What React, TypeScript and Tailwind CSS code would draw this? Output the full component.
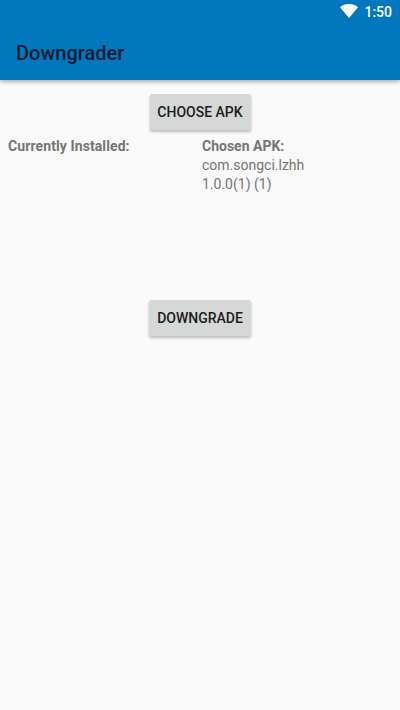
function StatusBar() {
    return (
        <div className="h-6 flex items-center justify-end pr-2 gap-[6px]">
            <svg width="18" height="14" viewBox="0 0 18 14" className="mt-[-2px]">
                <path d="M0 3.2C2.400 1.200 5.500 0 9 0s6.600 1.200 9 3.200L9 14z" fill="#ffffff" />
            </svg>
            <span className="text-[14px] font-medium text-white leading-none">1:50</span>
        </div>
    )
}

function RaisedButton({ label, wide }: { label: string; wide?: boolean }) {
    return (
        <button className={(wide ? "w-[102px]" : "w-[101px]") + " h-9 rounded-[2px] bg-[#d6d7d7] text-[14px] font-medium text-[#1c1c1c] leading-none shadow-[0_2px_3px_rgba(0,0,0,0.25)]"}>
            {label}
        </button>
    )
}

export default function App() {
    return (
        <div className="h-[710px] w-[400px] flex flex-col bg-[#fafafa] font-['Roboto',sans-serif] overflow-hidden">
            {/* App bar */}
            <header className="h-20 shrink-0 bg-[#0277bd] shadow-[0_2px_4px_rgba(0,0,0,0.3)] z-10">
                <StatusBar />
                <div className="h-14 flex items-center pl-4">
                    <h1 className="text-[20px] font-medium text-[#0a1c33] leading-none pt-[1px]">Downgrader</h1>
                </div>
            </header>

            <main className="flex flex-col items-center pt-[14px]">
                <RaisedButton label="CHOOSE APK" />

                <div className="w-full grid grid-cols-[194px_1fr] pl-2 mt-[7px] h-[108px] text-[14px] leading-[19px] text-[#757575]">
                    <div className="font-bold tracking-[0.1px]">Currently Installed:</div>
                    <div>
                        <div className="font-bold">Chosen APK:</div>
                        <div>com.songci.lzhh</div>
                        <div>1.0.0(1) (1)</div>
                    </div>
                </div>

                <div className="mt-[55px]">
                    <RaisedButton label="DOWNGRADE" wide />
                </div>
            </main>
        </div>
    )
}
